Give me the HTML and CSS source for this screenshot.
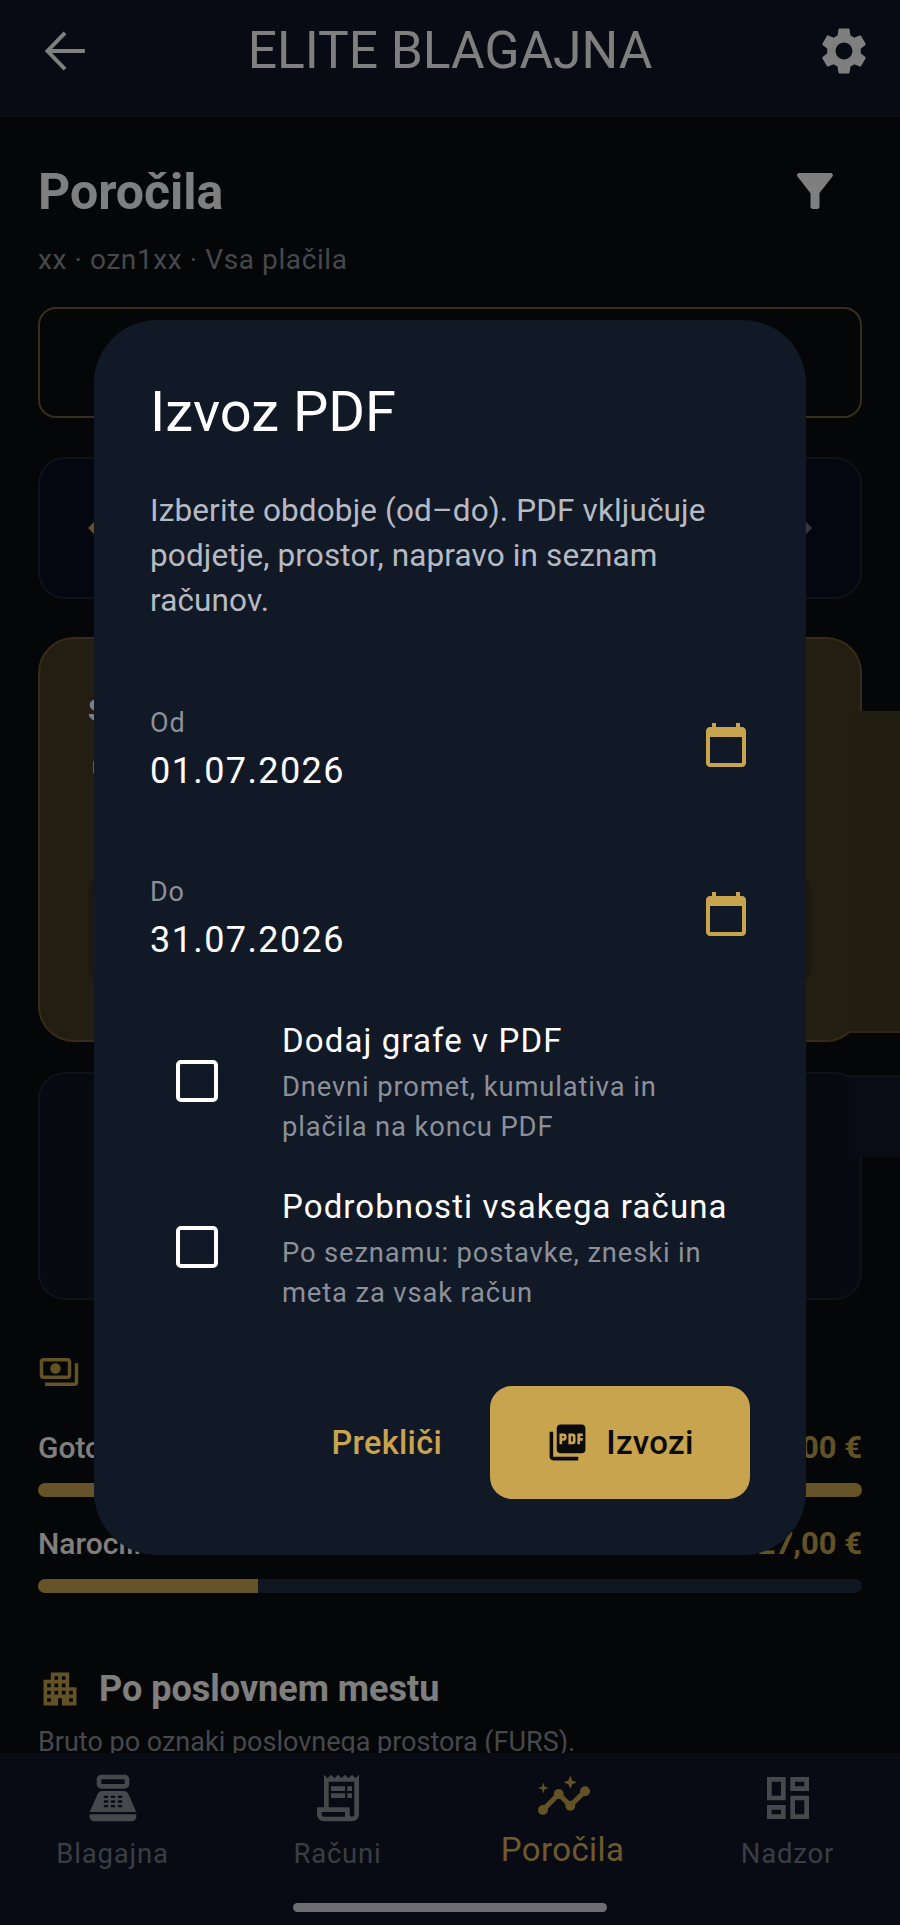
FILE: index.html

```html
<!DOCTYPE html>
<html lang="sl">
<head>
    <meta charset="UTF-8">
    <meta name="viewport" content="width=device-width, initial-scale=1.0">
    <title>Elite Blagajna - Poročila</title>
    <link rel="stylesheet" href="styles.css">
</head>
<body>
  <div class="screen">
    <header class="appbar">
      <svg class="appbar-icon back-icon" viewBox="0 0 24 24"><path d="M20.500 12H4.800M12 4.200 4.500 12 12 19.800"/></svg>
      <div class="appbar-title">ELITE BLAGAJNA</div>
      <svg class="appbar-icon" viewBox="0 0 24 24"><path d="M19.14 12.94c.04-.3.06-.61.06-.94 0-.32-.02-.64-.07-.94l2.03-1.58c.18-.14.23-.41.12-.61l-1.92-3.32c-.12-.22-.37-.29-.59-.22l-2.39.96c-.5-.38-1.03-.7-1.62-.94l-.36-2.54c-.04-.24-.24-.41-.48-.41h-3.84c-.24 0-.43.17-.47.41l-.36 2.54c-.59.24-1.13.57-1.62.94l-2.39-.96c-.22-.08-.47 0-.59.22L2.74 8.87c-.12.21-.08.47.12.61l2.03 1.58c-.05.3-.09.63-.09.94s.02.64.07.94l-2.03 1.58c-.18.14-.23.41-.12.61l1.92 3.32c.12.22.37.29.59.22l2.39-.96c.5.38 1.03.7 1.62.94l.36 2.54c.05.24.24.41.48.41h3.84c.24 0 .44-.17.47-.41l.36-2.54c.59-.24 1.13-.56 1.62-.94l2.39.96c.22.08.47 0 .59-.22l1.92-3.32c.12-.22.07-.47-.12-.61l-2.01-1.58zM12 15.6c-1.98 0-3.6-1.62-3.6-3.6s1.62-3.6 3.6-3.6 3.6 1.62 3.6 3.6-1.62 3.6-3.6 3.6z"/></svg>
    </header>

    <main class="content">
      <div class="page-head">
        <h1>Poročila</h1>
        <svg class="filter-icon" viewBox="0 0 24 24"><path d="M4.25 5.61C6.27 8.2 10 13 10 13v6c0 .55.45 1 1 1h2c.55 0 1-.45 1-1v-6s3.72-4.8 5.74-7.39c.51-.66.04-1.61-.79-1.61H5.04c-.83 0-1.3.95-.79 1.61z"/></svg>
      </div>
      <div class="page-sub">xx · ozn1xx · Vsa plačila</div>

      <div class="card-outline"></div>

      <div class="card-period">
        <span class="arrow arrow-left"></span>
        <span class="arrow arrow-right"></span>
      </div>

      <div class="card-total">
        <div class="total-label">Skupaj</div>
        <div class="total-value">Promet</div>
        <div class="total-panel"></div>
      </div>
      <div class="peek-total"></div>

      <div class="card-plain"></div>
      <div class="peek-plain"></div>

      <div class="pay-head">
        <svg class="pay-icon" viewBox="0 0 24 24"><path d="M19 14V6c0-1.1-.9-2-2-2H3c-1.1 0-2 .9-2 2v8c0 1.1.9 2 2 2h14c1.1 0 2-.9 2-2zm-2 0H3V6h14v8zm-7-7c-1.66 0-3 1.34-3 3s1.34 3 3 3 3-1.34 3-3-1.34-3-3-3zm13 0v11c0 1.1-.9 2-2 2H4v-2h17V7h2z"/></svg>
      </div>

      <div class="pay-row first">
        <span class="pay-name">Gotovina</span>
        <span class="pay-amount">1 100,00 €</span>
      </div>
      <div class="bar"><div class="bar-fill" style="width: 100%"></div></div>

      <div class="pay-row">
        <span class="pay-name">Narocilnica</span>
        <span class="pay-amount">427,00 €</span>
      </div>
      <div class="bar"><div class="bar-fill" style="width: 26.7%"></div></div>

      <div class="section-head">
        <svg class="section-icon" viewBox="0 0 24 24"><path d="M17 11V3H7v4H3v14h8v-4h2v4h8V11h-4zM7 19H5v-2h2v2zm0-4H5v-2h2v2zm0-4H5V9h2v2zm4 4H9v-2h2v2zm0-4H9V9h2v2zm0-4H9V5h2v2zm4 8h-2v-2h2v2zm0-4h-2V9h2v2zm0-4h-2V5h2v2zm4 12h-2v-2h2v2zm0-4h-2v-2h2v2z"/></svg>
        <h2>Po poslovnem mestu</h2>
      </div>
      <div class="section-sub">Bruto po oznaki poslovnega prostora (FURS).</div>
    </main>

    <nav class="bottom-nav">
      <div class="nav-item">
        <svg class="nav-icon" viewBox="0 0 24 24"><path d="M17 2H7c-1.1 0-2 .9-2 2v2c0 1.1.9 2 2 2h10c1.1 0 2-.9 2-2V4c0-1.1-.9-2-2-2zm0 4H7V4h10v2zm3 16H4c-1.1 0-2-.9-2-2v-1h20v1c0 1.1-.9 2-2 2zM18.53 10.19C18.21 9.47 17.49 9 16.7 9H7.3c-.79 0-1.51.47-1.83 1.19L2 18h20l-3.47-7.81zM9.5 16h-1a.5.5 0 0 1 0-1h1a.5.5 0 0 1 0 1zm0-2h-1a.5.5 0 0 1 0-1h1a.5.5 0 0 1 0 1zm0-2h-1a.5.5 0 0 1 0-1h1a.5.5 0 0 1 0 1zm3 4h-1a.5.5 0 0 1 0-1h1a.5.5 0 0 1 0 1zm0-2h-1a.5.5 0 0 1 0-1h1a.5.5 0 0 1 0 1zm0-2h-1a.5.5 0 0 1 0-1h1a.5.5 0 0 1 0 1zm3 4h-1a.5.5 0 0 1 0-1h1a.5.5 0 0 1 0 1zm0-2h-1a.5.5 0 0 1 0-1h1a.5.5 0 0 1 0 1zm0-2h-1a.5.5 0 0 1 0-1h1a.5.5 0 0 1 0 1z" fill-rule="evenodd"/></svg>
        <span class="nav-label">Blagajna</span>
      </div>
      <div class="nav-item">
        <svg class="nav-icon" viewBox="0 0 24 24"><path d="M19.5 3.5 18 2l-1.5 1.5L15 2l-1.5 1.5L12 2l-1.5 1.5L9 2 7.5 3.5 6 2v14H3v3c0 1.66 1.34 3 3 3h12c1.66 0 3-1.34 3-3V2l-1.5 1.5zM15 20H6c-.55 0-1-.45-1-1v-1h10v2zm4-1c0 .55-.45 1-1 1s-1-.45-1-1v-3H8V5h11v14z"/><path d="M9 7h6v2H9zm7 0h2v2h-2zm-7 3h6v2H9zm7 0h2v2h-2z"/></svg>
        <span class="nav-label">Računi</span>
      </div>
      <div class="nav-item active">
        <svg class="nav-icon" viewBox="0 0 56 56">
          <path class="graph-line" d="M8 40 23.7 24l11.6 11.7L50 21.3"/>
          <circle cx="8" cy="40" r="5"/>
          <circle cx="23.7" cy="24" r="5"/>
          <circle cx="35.3" cy="35.7" r="5"/>
          <circle cx="50" cy="21.3" r="5"/>
          <path d="M35.3 5.5 37.2 10.4 42 12.3 37.2 14.2 35.3 19 33.4 14.2 28.6 12.3 33.4 10.4z"/>
          <path d="M8.3 12.5 9.6 16.7 13.8 18 9.6 19.3 8.3 23.5 7 19.3 2.8 18 7 16.7z"/>
        </svg>
        <span class="nav-label">Poročila</span>
      </div>
      <div class="nav-item">
        <svg class="nav-icon" viewBox="0 0 24 24"><path d="M19 5v2h-4V5h4M9 5v6H5V5h4m10 8v6h-4v-6h4M9 17v2H5v-2h4M21 3h-8v6h8V3zM11 3H3v10h8V3zm10 8h-8v10h8V11zm-10 4H3v6h8v-6z"/></svg>
        <span class="nav-label">Nadzor</span>
      </div>
      <div class="home-bar"></div>
    </nav>

    <div class="scrim"></div>

    <section class="dialog">
      <h2 class="dialog-title">Izvoz PDF</h2>
      <p class="dialog-text">Izberite obdobje (od–do). PDF vključuje podjetje, prostor, napravo in seznam računov.</p>

      <div class="date-field">
        <div class="date-text">
          <div class="date-label">Od</div>
          <div class="date-value">01.07.2026</div>
        </div>
        <svg class="date-icon" viewBox="0 0 24 24"><path d="M20 3h-1V1h-2v2H7V1H5v2H4c-1.1 0-2 .9-2 2v16c0 1.1.9 2 2 2h16c1.1 0 2-.9 2-2V5c0-1.1-.9-2-2-2zm0 18H4V8h16v13z"/></svg>
      </div>
      <div class="date-field">
        <div class="date-text">
          <div class="date-label">Do</div>
          <div class="date-value">31.07.2026</div>
        </div>
        <svg class="date-icon" viewBox="0 0 24 24"><path d="M20 3h-1V1h-2v2H7V1H5v2H4c-1.1 0-2 .9-2 2v16c0 1.1.9 2 2 2h16c1.1 0 2-.9 2-2V5c0-1.1-.9-2-2-2zm0 18H4V8h16v13z"/></svg>
      </div>

      <div class="check-row">
        <span class="checkbox"></span>
        <div>
          <div class="check-title">Dodaj grafe v PDF</div>
          <div class="check-sub">Dnevni promet, kumulativa in<br>plačila na koncu PDF</div>
        </div>
      </div>
      <div class="check-row">
        <span class="checkbox"></span>
        <div>
          <div class="check-title">Podrobnosti vsakega računa</div>
          <div class="check-sub">Po seznamu: postavke, zneski in<br>meta za vsak račun</div>
        </div>
      </div>

      <div class="dialog-actions">
        <button class="btn-text">Prekliči</button>
        <button class="btn-gold">
          <svg class="btn-icon" viewBox="0 0 24 24"><path d="M20 2H8c-1.1 0-2 .9-2 2v12c0 1.1.9 2 2 2h12c1.1 0 2-.9 2-2V4c0-1.1-.9-2-2-2zm-8.500 7.500c0 .83-.67 1.500-1.500 1.500H9v2H7.500V7H10c.83 0 1.500.67 1.500 1.500v1zm5 2c0 .83-.67 1.500-1.500 1.500h-2.500V7H15c.83 0 1.500.67 1.500 1.500v3zm4-3H19v1h1.500V11H19v2h-1.500V7h3v1.500zM9 9.500h1v-1H9v1zM4 6H2v14c0 1.100.9 2 2 2h14v-2H4V6zm10 5.500h1v-3h-1v3z"/></svg>
          Izvozi
        </button>
      </div>
    </section>
  </div>
</body>
</html>
```

FILE: styles.css

```css
* {
    box-sizing: border-box;
}

body {
    margin: 0;
    font-family: "Roboto", "Liberation Sans", sans-serif;
    background-color: #0a0c10;
}

h1, h2, p {
    margin: 0;
}

.screen {
    position: relative;
    width: 900px;
    height: 1925px;
    overflow: hidden;
    display: flex;
    flex-direction: column;
    background-color: #0a0c10;
}

/* app bar */
.appbar {
    height: 117px;
    flex-shrink: 0;
    display: flex;
    align-items: center;
    padding: 0 28px 15px 37px;
    background-color: #111726;
}

.appbar-icon {
    width: 56px;
    height: 56px;
    flex-shrink: 0;
    fill: #fff;
}

.back-icon {
    fill: none;
    stroke: #fff;
    stroke-width: 1.7;
}

.appbar-title {
    flex: 1;
    padding-right: 9px;
    text-align: center;
    font-size: 51.5px;
    font-weight: 400;
    color: #fff;
    line-height: 60px;
}

/* page content */
.content {
    position: relative;
    flex: 1;
    min-height: 0;
    overflow: hidden;
    padding: 44px 38px 0;
}

.page-head {
    height: 60px;
    display: flex;
    justify-content: space-between;
    align-items: center;
    padding-right: 20px;
}

h1 {
    margin-top: 2px;
    font-size: 50px;
    font-weight: 700;
    color: #fff;
}

.filter-icon {
    width: 54px;
    height: 54px;
    fill: #fff;
}

.page-sub {
    margin-top: 21px;
    font-size: 28px;
    line-height: 36px;
    letter-spacing: 0.6px;
    color: #8b9099;
}

.card-outline {
    height: 111px;
    margin-top: 29px;
    border: 2px solid #6e5c3a;
    border-radius: 18px;
}

.card-period {
    height: 142px;
    margin-top: 39px;
    display: flex;
    justify-content: space-between;
    align-items: center;
    padding: 0 48px;
    background-color: #080e1e;
    border: 2px solid #1c2434;
    border-radius: 27px;
}

.arrow {
    width: 0;
    height: 0;
    border-top: 9px solid transparent;
    border-bottom: 9px solid transparent;
}

.arrow-left {
    border-right: 9px solid #c9a44e;
}

.arrow-right {
    border-left: 9px solid #6a6e78;
}

.card-total {
    height: 405px;
    margin-top: 38px;
    padding: 54px 48px 0;
    background-color: #483c24;
    border: 2px solid #6a5630;
    border-radius: 36px;
}

.total-label {
    font-size: 31px;
    font-weight: 700;
    line-height: 36px;
    color: #fff;
}

.total-value {
    margin: 28px 0 0 4px;
    font-size: 17px;
    line-height: 20px;
    color: #fff;
}

.total-panel {
    height: 113px;
    margin-top: 96px;
    background-color: #3d3320;
    border-radius: 20px;
}

/* next slides of the carousels, showing past the right edge */
.peek-total {
    position: absolute;
    top: 594px;
    left: 847px;
    width: 53px;
    height: 322px;
    background-color: #443a22;
    border-bottom: 2px solid #5c4d2e;
}

.peek-plain {
    position: absolute;
    top: 958px;
    left: 850px;
    width: 50px;
    height: 82px;
    background-color: #121828;
    border-top: 2px solid #1c2434;
}

.card-plain {
    height: 228px;
    margin-top: 30px;
    background-color: #0e1422;
    border: 2px solid #1c2434;
    border-radius: 27px;
}

.pay-head {
    height: 42px;
    margin-top: 51px;
}

.pay-icon {
    display: block;
    width: 42px;
    height: 42px;
    fill: #c9a44e;
}

.pay-row {
    display: flex;
    justify-content: space-between;
    align-items: center;
    height: 36px;
    margin-top: 28px;
    font-size: 30px;
    font-weight: 500;
}

.pay-row.first {
    margin-top: 36px;
}

.pay-name {
    color: #fff;
}

.pay-amount {
    font-size: 31px;
    color: #c9a44e;
    font-weight: 700;
}

.bar {
    height: 14px;
    margin-top: 18px;
    border-radius: 7px;
    background-color: #222e40;
    overflow: hidden;
}

.bar-fill {
    height: 100%;
    background-color: #cda950;
}

.section-head {
    display: flex;
    align-items: center;
    height: 44px;
    margin-top: 74px;
}

.section-icon {
    width: 44px;
    height: 44px;
    fill: #c9a44e;
    flex-shrink: 0;
}

.section-head h2 {
    margin-left: 17px;
    font-size: 36px;
    font-weight: 700;
    color: #fff;
}

.section-sub {
    margin-top: 13px;
    font-size: 27px;
    line-height: 36px;
    color: #8b9099;
}

/* bottom navigation */
.bottom-nav {
    position: relative;
    height: 172px;
    flex-shrink: 0;
    display: grid;
    grid-template-columns: repeat(4, 225px);
    padding-top: 17px;
    background-color: #111726;
}

.nav-item {
    display: flex;
    flex-direction: column;
    align-items: center;
}

.nav-icon {
    width: 56px;
    height: 56px;
    fill: #8c9099;
}

.nav-label {
    margin-top: 8px;
    font-size: 27.5px;
    line-height: 40px;
    letter-spacing: 0.8px;
    color: #747a88;
}

.nav-item.active .nav-icon {
    fill: #c9a44e;
}

.graph-line {
    fill: none;
    stroke: #c9a44e;
    stroke-width: 5;
}

.nav-item.active .nav-label {
    margin-top: 4px;
    font-size: 33px;
    letter-spacing: 0.4px;
    color: #d9b45c;
}

.home-bar {
    position: absolute;
    left: 293px;
    bottom: 13px;
    width: 314px;
    height: 9px;
    border-radius: 5px;
    background-color: #d8dce4;
}

.scrim {
    position: absolute;
    top: 0;
    right: 0;
    bottom: 0;
    left: 0;
    background-color: rgba(0, 0, 0, 0.5);
}

/* dialog */
.dialog {
    position: absolute;
    top: 320px;
    left: 94px;
    width: 712px;
    height: 1235px;
    padding: 56px 56px 0;
    background-color: #111927;
    border-radius: 63px;
}

.dialog-title {
    font-size: 56px;
    font-weight: 400;
    line-height: 72px;
    color: #fff;
}

.dialog-text {
    margin-top: 40px;
    font-size: 31.5px;
    line-height: 45px;
    letter-spacing: 0.13px;
    color: #b6bac3;
}

.date-field {
    display: flex;
    justify-content: space-between;
    align-items: center;
    height: 169px;
}

.dialog-text + .date-field {
    margin-top: 40px;
}

.date-text {
    padding-top: 5px;
}

.date-label {
    font-size: 27px;
    line-height: 36px;
    letter-spacing: 0.9px;
    color: #8b9099;
}

.date-value {
    margin-top: 6px;
    font-size: 36px;
    line-height: 48px;
    letter-spacing: 1.4px;
    color: #fff;
}

.date-icon {
    width: 48px;
    height: 48px;
    margin-bottom: 6px;
    fill: #c9a44e;
}

.check-row {
    display: flex;
    align-items: center;
    height: 166px;
    padding-left: 26px;
}

.date-field + .check-row {
    margin-top: -1px;
}

.checkbox {
    width: 42px;
    height: 42px;
    flex-shrink: 0;
    margin-right: 64px;
    margin-bottom: 4px;
    border: 4px solid #fff;
    border-radius: 5px;
}

.check-title {
    font-size: 33px;
    line-height: 44px;
    letter-spacing: 1.1px;
    color: #fff;
}

.check-sub {
    margin-top: 4px;
    font-size: 27.4px;
    line-height: 40px;
    letter-spacing: 0.85px;
    color: #8b9099;
}

.dialog-actions {
    display: flex;
    justify-content: flex-end;
    align-items: center;
    margin-top: 54px;
}

.btn-text {
    margin-right: 48px;
    padding: 0;
    border: none;
    background: none;
    font-family: inherit;
    font-size: 32.5px;
    font-weight: 500;
    letter-spacing: 0.3px;
    color: #c9a44e;
}

.btn-gold {
    display: flex;
    justify-content: center;
    align-items: center;
    gap: 17px;
    width: 260px;
    height: 113px;
    border: none;
    border-radius: 22px;
    background-color: #c9a44e;
    font-family: inherit;
    font-size: 33px;
    font-weight: 500;
    letter-spacing: 0.3px;
    color: #0b0b0b;
}

.btn-icon {
    width: 43px;
    height: 43px;
    fill: #0b0b0b;
}
```
